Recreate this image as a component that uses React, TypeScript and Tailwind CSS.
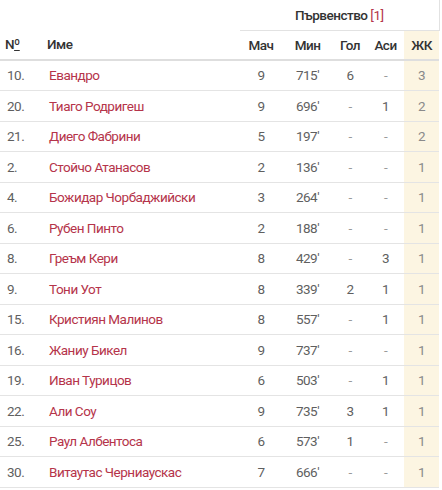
const rows: [string, string, number, number, string, string, number][] = [
  ["10.", "Евандро", 9, 715, "6", "-", 3],
  ["20.", "Тиаго Родригеш", 9, 696, "-", "1", 2],
  ["21.", "Диего Фабрини", 5, 197, "-", "-", 2],
  ["2.", "Стойчо Атанасов", 2, 136, "-", "-", 1],
  ["4.", "Божидар Чорбаджийски", 3, 264, "-", "-", 1],
  ["6.", "Рубен Пинто", 2, 188, "-", "-", 1],
  ["8.", "Греъм Кери", 8, 429, "-", "3", 1],
  ["9.", "Тони Уот", 8, 339, "2", "1", 1],
  ["15.", "Кристиян Малинов", 8, 557, "-", "1", 1],
  ["16.", "Жаниу Бикел", 9, 737, "-", "-", 1],
  ["19.", "Иван Турицов", 6, 503, "-", "1", 1],
  ["22.", "Али Соу", 9, 735, "3", "1", 1],
  ["25.", "Раул Албентоса", 6, 573, "1", "-", 1],
  ["30.", "Витаутас Черниаускас", 7, 666, "-", "-", 1],
];

function Cell({ value }: { value: string }) {
  return (
    <td className={`text-center ${value === "-" ? "text-[#9a9a9a]" : "text-[#5f5f5f]"}`}>{value}</td>
  );
}

export default function App() {
  return (
    <div
      className="h-[490px] w-[442px] overflow-hidden bg-white text-[13.5px] tracking-[-0.5px]"
      style={{ fontFamily: 'Roboto, "Liberation Sans", sans-serif' }}
    >
      <table className="w-[439px] table-fixed border-collapse">
        <colgroup>
          <col className="w-[40px]" />
          <col className="w-[200px]" />
          <col className="w-[42px]" />
          <col className="w-[51px]" />
          <col className="w-[34px]" />
          <col className="w-[37px]" />
          <col className="w-[35px]" />
        </colgroup>
        <thead>
          <tr className="h-[30px]">
            <th colSpan={2} />
            <th colSpan={5} className="border-b border-r border-[#e2e2e2] text-center font-medium text-[#333]">
              Първенство <span className="font-normal text-[#b5344a]">[1]</span>
            </th>
          </tr>
          <tr className="h-[30px] border-b-2 border-[#dedede] text-[#333]">
            <th className="pl-[5px] text-left font-medium">
              N<span className="underline">º</span>
            </th>
            <th className="pl-[7px] text-left font-medium">Име</th>
            <th className="text-center font-medium">Мач</th>
            <th className="text-center font-medium">Мин</th>
            <th className="text-center font-medium">Гол</th>
            <th className="text-center font-medium">Аси</th>
            <th className="bg-[#fcf5e2] text-center font-medium">ЖК</th>
          </tr>
        </thead>
        <tbody>
          {rows.map(([no, name, mp, min, g, a, yc]) => (
            <tr key={no} className="h-[30.5px] border-b border-[#e4e4e4]">
              <td className="pl-[7px] text-[#5f5f5f]">{no}</td>
              <td className="pl-[9px] text-[#b5344a]">{name}</td>
              <td className="text-center text-[#5f5f5f]">{mp}</td>
              <td className="text-center text-[#5f5f5f]">{min}′</td>
              <Cell value={g} />
              <Cell value={a} />
              <td className="bg-[#fcf5e2] text-center text-[#8a8a8a]">{yc}</td>
            </tr>
          ))}
        </tbody>
      </table>
    </div>
  );
}
